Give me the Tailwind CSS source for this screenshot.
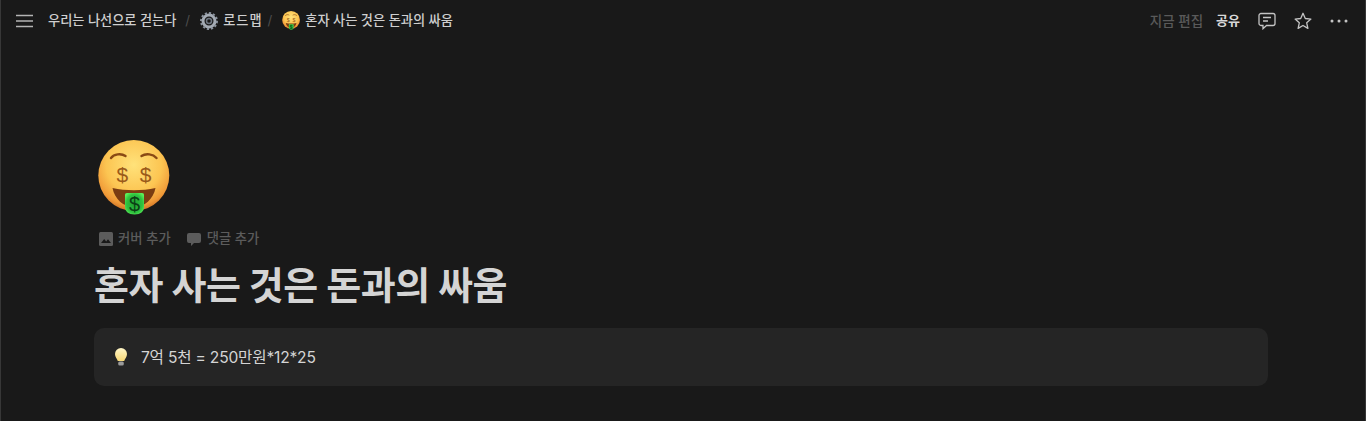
<!DOCTYPE html>
<html lang="ko">
<head>
<meta charset="utf-8">
<script src="https://cdn.jsdelivr.net/npm/@tailwindcss/browser@4"></script>
</head>
<body class="m-0 bg-[#191919]">
<svg width="0" height="0" class="absolute">
  <defs>
    <radialGradient id="face" cx="50%" cy="35%" r="65%">
      <stop offset="0%" stop-color="#ffe27a"/>
      <stop offset="60%" stop-color="#fcc552"/>
      <stop offset="88%" stop-color="#f09a38"/>
      <stop offset="100%" stop-color="#cf7426"/>
    </radialGradient>
    <radialGradient id="tongue" cx="50%" cy="50%" r="60%">
      <stop offset="0%" stop-color="#1f9e31"/>
      <stop offset="70%" stop-color="#2fc23f"/>
      <stop offset="100%" stop-color="#5cf05a"/>
    </radialGradient>
    <linearGradient id="bulb" x1="0" y1="0" x2="0" y2="1">
      <stop offset="0%" stop-color="#fff6c8"/>
      <stop offset="100%" stop-color="#f7d774"/>
    </linearGradient>
    <symbol id="money" viewBox="0 0 72 76">
      <circle cx="36.300" cy="35.500" r="35.500" fill="url(#face)"/>
      <path d="M13.500 18c3-4 10-5 14.500-2M44 16c4.500-3 11.500-2 15 2" fill="none" stroke="#8a4a14" stroke-width="2.400" stroke-linecap="round"/>
      <text x="24.800" y="42" text-anchor="middle" font-family="Liberation Sans" font-size="21" fill="#9a5a1a">$</text>
      <text x="48" y="42" text-anchor="middle" font-family="Liberation Sans" font-size="21" fill="#9a5a1a">$</text>
      <path d="M15 48c13 3 30 3 43 0-2 11-11 19-21.500 19S17 59 15 48z" fill="#7a3c12"/>
      <path d="M29.500 53h15c1.500 0 2 .8 2 2v12c0 4.500-3.500 7.500-9.500 7.500s-9.500-3-9.500-7.500V55c0-1.200.5-2 2-2z" fill="url(#tongue)"/>
      <text x="37" y="71" text-anchor="middle" font-family="Liberation Sans" font-size="20" fill="#0b3f15">$</text>
    </symbol>
  </defs>
</svg>
<div class="w-[1366px] h-[421px] overflow-hidden border-x border-[#373737] text-[#d4d4d4]" style="font-family:'Inter','Noto Sans CJK KR',sans-serif">
  <header class="h-[42px] flex items-center justify-between pl-[15px] pr-[17px]">
    <div class="flex items-center text-[13.2px] font-medium text-[#cfcfcf]">
      <svg width="18" height="14" viewBox="0 0 18 14" class="mr-[14px]" fill="none" stroke="#b4b4b4" stroke-width="1.400"><path d="M0 1.500h17M0 7h17M0 12.500h17"/></svg>
      <span>우리는 나선으로 걷는다</span>
      <span class="ml-[9px] mr-[10px] text-[#4c4c4c] font-normal">/</span>
      <svg width="18" height="18" viewBox="0 0 18 18" class="mr-[5px]"><circle cx="9" cy="9" r="6" fill="none" stroke="#a4abb4" stroke-width="3"/><circle cx="9" cy="9" r="8" fill="none" stroke="#8b939e" stroke-width="2" stroke-dasharray="2.200 1.950"/><circle cx="9" cy="9" r="2.500" fill="none" stroke="#6f7782" stroke-width="1.500"/></svg>
      <span class="tracking-[1px]">로드맵</span>
      <span class="ml-[5px] mr-[10px] text-[#4c4c4c] font-normal">/</span>
      <svg width="18" height="19" class="mr-[5px]"><use href="#money"/></svg>
      <span>혼자 사는 것은 돈과의 싸움</span>
    </div>
    <div class="flex items-center text-[13px]">
      <span class="text-[#5a5a5a] font-medium text-[13.5px]">지금 편집</span>
      <span class="ml-[13px] font-semibold text-[#d8d8d8]">공유</span>
      <svg width="18" height="18" viewBox="0 0 18 18" class="ml-[18px]" fill="none" stroke="#c4c4c4" stroke-width="1.300"><path d="M3 1.500h12a2 2 0 0 1 2 2v8a2 2 0 0 1-2 2H8.500L5 16.700v-3.200H3a2 2 0 0 1-2-2v-8a2 2 0 0 1 2-2z"/><path d="M5 5.500h8M5 9h5"/></svg>
      <svg width="18" height="18" viewBox="0 0 18 18" class="ml-[18px]" fill="none" stroke="#c4c4c4" stroke-width="1.300" stroke-linejoin="round"><path d="M9 1.300l2.300 5.200 5.600.6-4.200 3.700 1.200 5.600L9 13.500l-4.900 2.900 1.200-5.600L1.100 7.100l5.600-.6z"/></svg>
      <svg width="18" height="4" viewBox="0 0 18 4" class="ml-[18px]" fill="#c4c4c4"><circle cx="2" cy="2" r="1.500"/><circle cx="9" cy="2" r="1.500"/><circle cx="16" cy="2" r="1.500"/></svg>
    </div>
  </header>
  <main class="pl-[93px] w-[1267px]">
    <svg width="75" height="76" class="ml-[2px] mt-[98px] block"><use href="#money"/></svg>
    <div class="flex items-center mt-[11px] h-[24px] text-[13.3px] text-[#5c5c5c] font-medium">
      <svg width="16" height="16" viewBox="0 0 16 16" class="ml-[4px] mr-[4px]"><rect x="1" y="1" width="14" height="14" rx="1.500" fill="#5c5c5c"/><path d="M3 12l3.200-4 2 2.400 1.800-2.200 3 3.800z" fill="#191919"/></svg>
      <span class="tracking-[0.05px]">커버 추가</span>
      <svg width="16" height="16" viewBox="0 0 16 16" class="ml-[15px] mr-[5px]"><path d="M3 2h10a2 2 0 0 1 2 2v6a2 2 0 0 1-2 2H8l-3 3v-3H3a2 2 0 0 1-2-2V4a2 2 0 0 1 2-2z" fill="#5c5c5c"/></svg>
      <span>댓글 추가</span>
    </div>
    <h1 class="mt-[12px] text-[38px] leading-[44px] font-bold text-[#d4d4d4] tracking-[-0.5px]">혼자 사는 것은 돈과의 싸움</h1>
    <div class="mt-[21px] h-[58px] rounded-[10px] bg-[#252525] flex items-center pl-[18px] text-[15.6px] tracking-[-0.2px] text-[#d4d4d4]">
      <svg width="18" height="20" viewBox="0 0 18 20" class="mr-[11px]"><path d="M9 1a6 6 0 0 0-6 6c0 3 2 4.500 2.800 7h6.400C13 11.500 15 10 15 7a6 6 0 0 0-6-6z" fill="url(#bulb)"/><rect x="6.200" y="14.500" width="5.600" height="4" rx="1.500" fill="#9a9a9a"/></svg>
      <span class="pt-[2px]">7억 5천 = 250만원*12*25</span>
    </div>
  </main>
</div>
</body>
</html>
